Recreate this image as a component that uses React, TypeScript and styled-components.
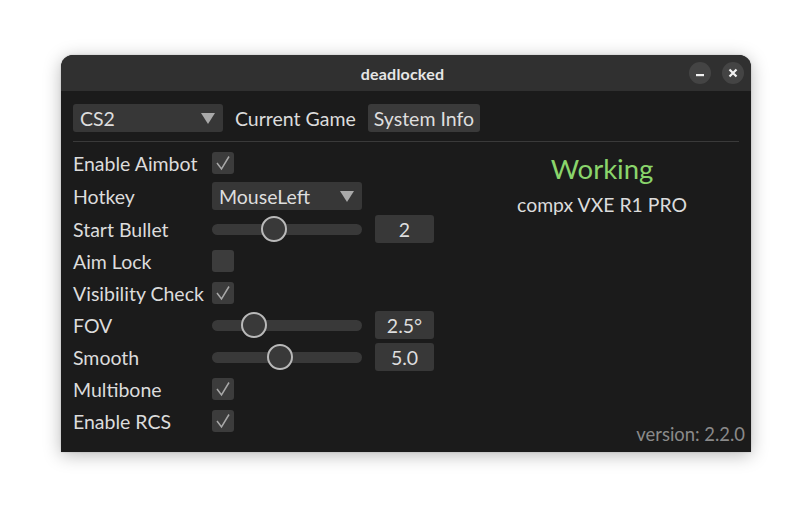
import React from "react";
import styled, { createGlobalStyle } from "styled-components";

const Global = createGlobalStyle`
  html, body { margin: 0; padding: 0; background: #ffffff; }
  body { font-family: Lato, "Open Sans", sans-serif; }
`;

const Page = styled.div`
  width: 812px;
  height: 519px;
  padding: 55px 0 0 61px;
  box-sizing: border-box;
`;

const Window = styled.div`
  width: 690px;
  height: 397px;
  display: flex;
  flex-direction: column;
  border-radius: 12px 12px 0 0;
  overflow: hidden;
  box-shadow: 0 3px 18px rgba(0, 0, 0, 0.28), 0 0 2px rgba(0, 0, 0, 0.2);
  background: #1b1b1b;
`;

const TitleBar = styled.div`
  height: 36px;
  flex: none;
  background: #303030;
  display: grid;
  grid-template-columns: 1fr auto 1fr;
  align-items: center;
  padding: 0 7px 0 0;
`;

const Title = styled.div`
  grid-column: 2;
  color: #e6e6e6;
  font-weight: 700;
  font-size: 16px;
  letter-spacing: 0.2px;
`;

const TitleButtons = styled.div`
  grid-column: 3;
  justify-self: end;
  display: flex;
  gap: 11px;
`;

const RoundButton = styled.div`
  width: 22px;
  height: 22px;
  border-radius: 50%;
  background: #444444;
  display: flex;
  align-items: center;
  justify-content: center;
`;

const Body = styled.div`
  flex: 1;
  display: flex;
  flex-direction: column;
  padding: 13px 12px 0 12px;
`;

const TopBar = styled.div`
  display: flex;
  align-items: center;
  gap: 12px;
  height: 28px;
`;

const Combo = styled.div<{ $w: number }>`
  width: ${(p) => p.$w}px;
  height: 28px;
  box-sizing: border-box;
  background: #373737;
  border-radius: 3px;
  display: flex;
  align-items: center;
  justify-content: space-between;
  padding: 0 8px 0 7px;
  color: #dedede;
  font-size: 19.5px;
`;

const Label = styled.div`
  color: #dcdcdc;
  font-size: 19.5px;
  white-space: nowrap;
`;

const Button = styled.div`
  height: 28px;
  box-sizing: border-box;
  background: #3a3a3a;
  border-radius: 3px;
  padding: 0 6px;
  display: flex;
  align-items: center;
  color: #dedede;
  font-size: 19.5px;
`;

const Separator = styled.div`
  height: 1px;
  background: #3a3a3a;
  margin: 9px 0 5px 0;
`;

const Main = styled.div`
  flex: 1;
  display: grid;
  grid-template-columns: 392px 1fr;
`;

const Rows = styled.div`
  display: flex;
  flex-direction: column;
`;

const Row = styled.div<{ $h?: number }>`
  height: ${(p) => p.$h ?? 32}px;
  display: flex;
  align-items: center;
`;

const RowLabel = styled(Label)`
  width: 139px;
`;

const CheckBox = styled.div`
  width: 22px;
  height: 22px;
  border-radius: 3px;
  background: #3c3c3c;
  display: flex;
  align-items: center;
  justify-content: center;
`;

const SliderWrap = styled.div`
  display: flex;
  align-items: center;
  gap: 13px;
`;

const Track = styled.div`
  position: relative;
  width: 150px;
  height: 11px;
  border-radius: 6px;
  background: #393939;
`;

const Thumb = styled.div`
  position: absolute;
  top: 50%;
  width: 22px;
  height: 22px;
  border-radius: 50%;
  background: #393939;
  border: 2px solid #b9b9b9;
  transform: translate(-50%, -50%);
`;

const ValueBox = styled.div`
  width: 59px;
  height: 28px;
  border-radius: 3px;
  background: #383838;
  display: flex;
  align-items: center;
  justify-content: center;
  color: #dedede;
  font-size: 19.5px;
`;

const Side = styled.div`
  display: flex;
  flex-direction: column;
  align-items: center;
  padding-top: 5px;
`;

const Status = styled.div`
  color: #8ad56b;
  font-size: 27.5px;
  line-height: 34px;
`;

const Device = styled.div`
  color: #dcdcdc;
  font-size: 19.4px;
  margin-top: 7px;
`;

const Version = styled.div`
  margin-top: auto;
  align-self: flex-end;
  margin-right: -6px;
  margin-bottom: 7px;
  color: #8a8a8a;
  font-size: 18.4px;
`;

const Arrow = () => (
  <svg width="14" height="11" viewBox="0 0 14 11">
    <polygon points="0,0 14,0 7,11" fill="#a9a9a9" />
  </svg>
);

const Check = () => (
  <svg width="22" height="22" viewBox="0 0 22 22">
    <polyline points="5,11 9.5,17 17,4.5" fill="none" stroke="#a8a8a8" strokeWidth="1.5" />
  </svg>
);

const Slider: React.FC<{ pos: number; value: string }> = ({ pos, value }) => (
  <SliderWrap>
    <Track>
      <Thumb style={{ left: `${pos}px` }} />
    </Track>
    <ValueBox>{value}</ValueBox>
  </SliderWrap>
);

export default function App() {
  return (
    <>
      <Global />
      <Page>
        <Window>
          <TitleBar>
            <Title>deadlocked</Title>
            <TitleButtons>
              <RoundButton>
                <svg width="10" height="10" viewBox="0 0 10 10">
                  <rect x="1" y="6" width="8" height="2.2" fill="#f2f2f2" />
                </svg>
              </RoundButton>
              <RoundButton>
                <svg width="10" height="10" viewBox="0 0 10 10">
                  <path d="M1.5 1.5 L8.5 8.5 M8.5 1.5 L1.5 8.5" stroke="#f2f2f2" strokeWidth="2.2" />
                </svg>
              </RoundButton>
            </TitleButtons>
          </TitleBar>
          <Body>
            <TopBar>
              <Combo $w={150}>
                CS2
                <Arrow />
              </Combo>
              <Label>Current Game</Label>
              <Button>System Info</Button>
            </TopBar>
            <Separator />
            <Main>
              <Rows>
                <Row>
                  <RowLabel>Enable Aimbot</RowLabel>
                  <CheckBox><Check /></CheckBox>
                </Row>
                <Row $h={34}>
                  <RowLabel>Hotkey</RowLabel>
                  <Combo $w={150}>
                    MouseLeft
                    <Arrow />
                  </Combo>
                </Row>
                <Row>
                  <RowLabel>Start Bullet</RowLabel>
                  <Slider pos={62} value="2" />
                </Row>
                <Row>
                  <RowLabel>Aim Lock</RowLabel>
                  <CheckBox />
                </Row>
                <Row>
                  <RowLabel>Visibility Check</RowLabel>
                  <CheckBox><Check /></CheckBox>
                </Row>
                <Row>
                  <RowLabel>FOV</RowLabel>
                  <Slider pos={42} value="2.5°" />
                </Row>
                <Row>
                  <RowLabel>Smooth</RowLabel>
                  <Slider pos={68} value="5.0" />
                </Row>
                <Row>
                  <RowLabel>Multibone</RowLabel>
                  <CheckBox><Check /></CheckBox>
                </Row>
                <Row>
                  <RowLabel>Enable RCS</RowLabel>
                  <CheckBox><Check /></CheckBox>
                </Row>
              </Rows>
              <Side>
                <Status>Working</Status>
                <Device>compx VXE R1 PRO</Device>
                <Version>version: 2.2.0</Version>
              </Side>
            </Main>
          </Body>
        </Window>
      </Page>
    </>
  );
}
